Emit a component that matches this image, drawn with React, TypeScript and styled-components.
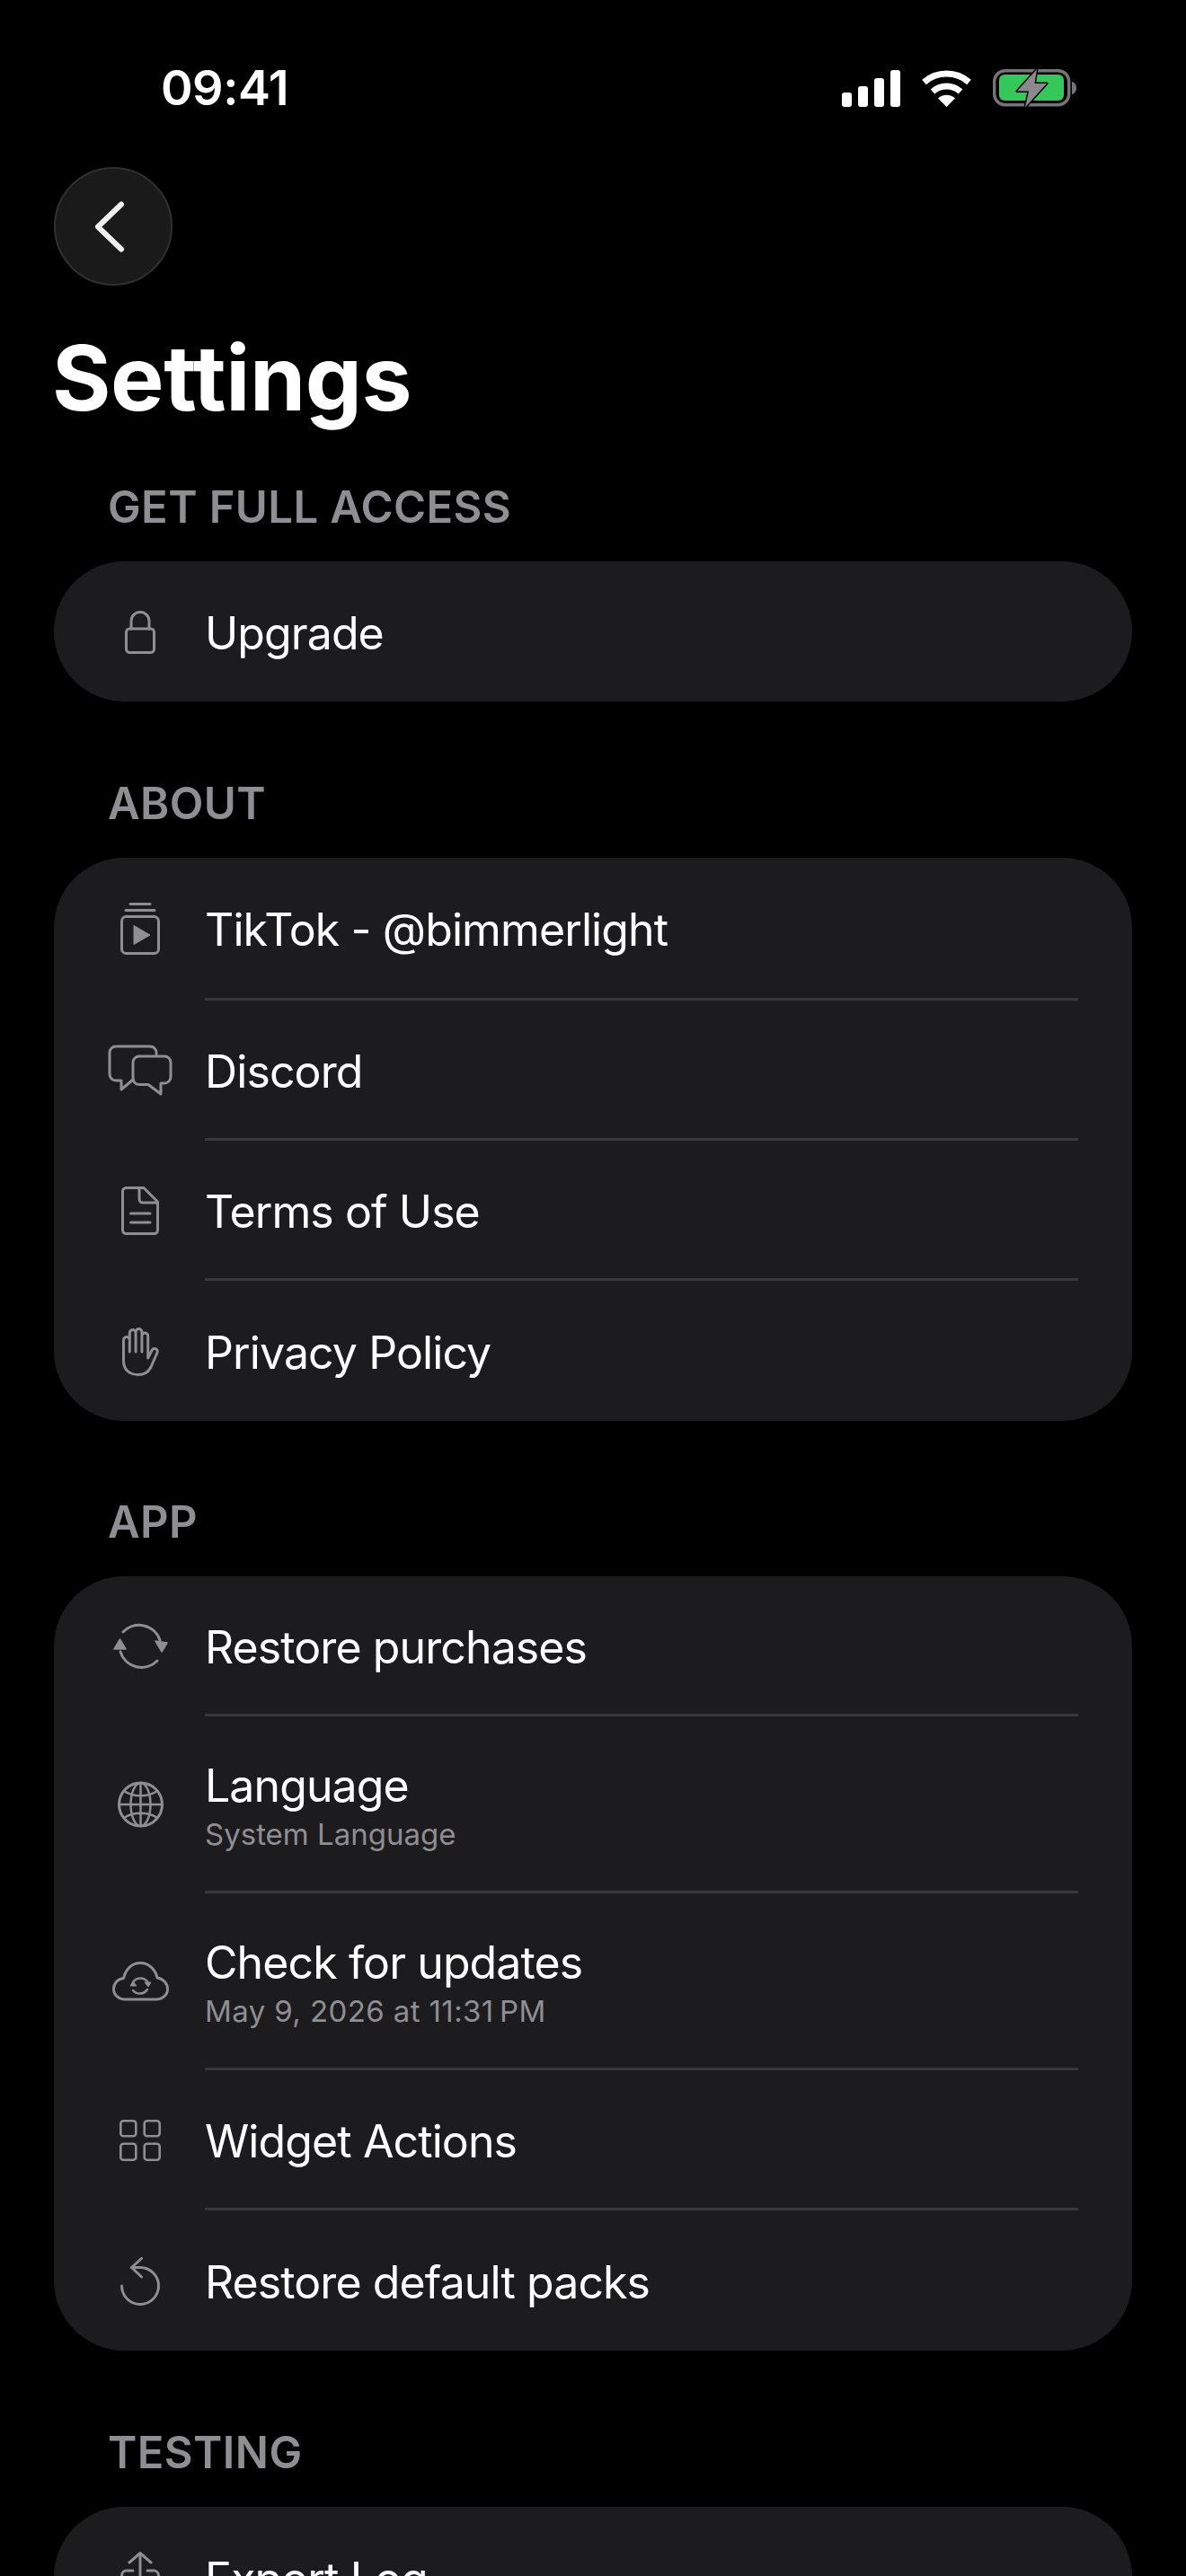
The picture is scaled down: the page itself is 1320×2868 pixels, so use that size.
import React from 'react';
import styled, { createGlobalStyle } from 'styled-components';

const GlobalStyle = createGlobalStyle`
  html, body {
    margin: 0;
    padding: 0;
    background: #000;
  }
`;

const Page = styled.div`
  width: 1320px;
  height: 2868px;
  overflow: hidden;
  background: #000;
  color: #fff;
  font-family: Inter, 'Liberation Sans', sans-serif;
  -webkit-font-smoothing: antialiased;
`;

const StatusBar = styled.div`
  box-sizing: border-box;
  height: 160px;
  padding: 36px 122px 0 179px;
  display: flex;
  align-items: center;
  justify-content: space-between;
`;

const Time = styled.span`
  font-size: 54px;
  font-weight: 600;
  line-height: 60px;
  letter-spacing: -0.5px;
`;

const StatusIcons = styled.div`
  display: flex;
  align-items: center;
  gap: 23px;
`;

const Content = styled.div`
  padding: 26px 60px 0;
`;

const BackButton = styled.button`
  box-sizing: border-box;
  display: flex;
  align-items: center;
  justify-content: center;
  width: 132px;
  height: 132px;
  padding: 0 9px 0 0;
  border: 2px solid #303030;
  border-radius: 50%;
  background: #1a1a1a;
`;

const Title = styled.h1`
  margin: 43px 0 0 -2px;
  font-size: 100px;
  font-weight: 700;
  line-height: 120px;
  letter-spacing: -0.4px;
`;

const Section = styled.section<{ $gap: number }>`
  margin-top: ${(p) => p.$gap}px;
`;

const SectionLabel = styled.h2`
  margin: 0 0 30px;
  padding-left: 60px;
  font-size: 49px;
  font-weight: 600;
  line-height: 60px;
  letter-spacing: 0.4px;
  color: #8e8e93;
`;

const Card = styled.div`
  border-radius: 78px;
  background: #1c1c1e;
`;

const Row = styled.div<{ $height: number }>`
  display: flex;
  align-items: center;
  gap: 36px;
  box-sizing: border-box;
  height: ${(p) => p.$height}px;
  padding: 2px 0 0 60px;
`;

const IconSlot = styled.div`
  flex: none;
  width: 72px;
  display: flex;
  justify-content: center;
  color: #8e8e93;

  svg {
    display: block;
  }
`;

const Labels = styled.div`
  display: flex;
  flex-direction: column;
`;

const RowTitle = styled.span`
  padding-top: 2px;
  font-size: 50px;
  font-weight: 400;
  line-height: 60px;
  letter-spacing: -0.9px;
`;

const RowSub = styled.span<{ $spaced?: boolean }>`
  margin-top: 4px;
  font-size: 33px;
  font-weight: 400;
  line-height: 40px;
  letter-spacing: ${(p) => (p.$spaced ? '0.4px' : '0')};
  color: #8e8e93;
`;

const Divider = styled.div`
  height: 3px;
  margin: 0 60px 0 168px;
  background: #38383a;
`;

const line = {
  fill: 'none',
  stroke: 'currentColor',
  strokeWidth: 3,
  strokeLinecap: 'round',
  strokeLinejoin: 'round',
} as const;

const SignalIcon = () => (
  <svg width="65" height="41" viewBox="0 0 65 41" fill="#fff">
    <rect x="0" y="25" width="11" height="16" rx="3" />
    <rect x="18" y="18" width="11" height="23" rx="3" />
    <rect x="36" y="9" width="11" height="32" rx="3" />
    <rect x="54" y="0" width="11" height="41" rx="3" />
  </svg>
);

const WifiIcon = () => (
  <svg width="57" height="42" viewBox="0 0 57 42">
    <path d="M3.5 14.5A38 38 0 0 1 53.5 14.5" fill="none" stroke="#fff" strokeWidth="7" />
    <path d="M13 25A23 23 0 0 1 44 25" fill="none" stroke="#fff" strokeWidth="7" />
    <path d="M19 32.5A14 14 0 0 1 38 32.5L28.5 42Z" fill="#fff" />
  </svg>
);

const BatteryIcon = () => (
  <svg width="93" height="44" viewBox="0 0 93 44">
    <rect x="1.7" y="2.7" width="83" height="38" rx="12" fill="none" stroke="#757577" strokeWidth="3.4" />
    <rect x="7" y="7" width="72" height="29" rx="6" fill="#34c759" />
    <path d="M88 15c3 .5 5 3 5 7s-2 6.500-5 7Z" fill="#757577" />
    <path
      d="M49 1L27 25.500H40L36 43.500L60 17H46.500Z"
      fill="#8a8a8e"
      stroke="#000"
      strokeWidth="3"
      strokeLinejoin="round"
      paintOrder="stroke"
    />
  </svg>
);

const ChevronIcon = () => (
  <svg width="34" height="57" viewBox="0 0 34 57">
    <path d="M30 3.500L4 28.500L30 53.500" fill="none" stroke="#eee" strokeWidth="6" strokeLinecap="round" strokeLinejoin="round" />
  </svg>
);

const LockIcon = () => (
  <svg width="34" height="48" viewBox="0 0 34 48">
    <rect x="1.500" y="20" width="31" height="26.500" rx="4" {...line} />
    <path d="M7 20V11.500a10 10 0 0 1 20 0V20" {...line} />
  </svg>
);

const ReelIcon = () => (
  <svg width="44" height="58" viewBox="0 0 44 58">
    <path d="M11 1.500H33" {...line} />
    <path d="M6 8.500H38" {...line} />
    <rect x="1.500" y="15.500" width="41" height="41" rx="5" {...line} />
    <path d="M15 25.500V46.500L33 36Z" fill="currentColor" stroke="currentColor" strokeWidth="1" strokeLinejoin="round" />
  </svg>
);

const ChatIcon = () => (
  <svg width="72" height="58" viewBox="0 0 72 58">
    <path d="M54 12V9a7 7 0 0 0-7-7H9a7 7 0 0 0-7 7V33a7 7 0 0 0 7 7h6V50L28 39" {...line} />
    <path d="M35 13H63a7 7 0 0 1 7 7V36a7 7 0 0 1-7 7H59V55L45 44.500H35a7 7 0 0 1-7-7V20a7 7 0 0 1 7-7Z" {...line} />
  </svg>
);

const DocIcon = () => (
  <svg width="42" height="54" viewBox="0 0 42 54">
    <path d="M5.500 1.500H25L40.500 17V48.500a4 4 0 0 1-4 4H5.500a4 4 0 0 1-4-4V5.500a4 4 0 0 1 4-4Z" {...line} />
    <path d="M20 2V14a4 4 0 0 0 4 4H40" {...line} />
    <path d="M10.500 30H32" {...line} />
    <path d="M10.500 40H32" {...line} />
  </svg>
);

const HandIcon = () => (
  <svg width="41" height="54" viewBox="0 0 41 54">
    <path d="M1.500 37V14a3.400 3.400 0 0 1 6.800 0V27V6a3.400 3.400 0 0 1 6.800 0V27V5a3.400 3.400 0 0 1 6.800 0V27V9.500a3.400 3.400 0 0 1 6.800 0V34L33 25.500a3 3 0 0 1 6 2.500L32 44C29 50 25 52.500 18 52.500C8 52.500 1.500 47 1.500 37Z" {...line} />
  </svg>
);

const SyncIcon = () => (
  <svg width="61" height="52" viewBox="0 0 61 52">
    <path d="M11 10A24.500 24.500 0 0 1 52 19" {...line} />
    <path d="M8 32A24.500 24.500 0 0 0 49 42" {...line} />
    <path d="M47 20L60 22L54 32Z" fill="currentColor" stroke="currentColor" strokeWidth="1.500" strokeLinejoin="round" />
    <path d="M1 29L14 29L7.500 18Z" fill="currentColor" stroke="currentColor" strokeWidth="1.500" strokeLinejoin="round" />
  </svg>
);

const GlobeIcon = () => (
  <svg width="51" height="52" viewBox="0 0 51 52">
    <circle cx="25.500" cy="26" r="24" {...line} />
    <ellipse cx="25.500" cy="26" rx="11" ry="24" {...line} strokeWidth="2.500" />
    <path d="M25.500 2V50M1.500 26H49.500" {...line} strokeWidth="2.500" />
    <path d="M7 11C17 18 34 18 44 11M7 41C17 34 34 34 44 41" {...line} strokeWidth="2.500" />
  </svg>
);

const CloudIcon = () => (
  <svg width="63" height="44" viewBox="0 0 63 44">
    <path d="M14 42H49C56 42 61.500 37 61.500 30.500C61.500 24 56.500 19 50 18C48 9 41 1.500 31 1.500C22 1.500 15 8 12.500 18.500C6 19.500 1.500 24 1.500 30.500C1.500 37 7 42 14 42Z" {...line} />
    <path d="M23 23A10 10 0 0 1 39 22" {...line} strokeWidth="2.500" />
    <path d="M23 32A10 10 0 0 0 39 31" {...line} strokeWidth="2.500" />
    <path d="M36 23L43 23L40 28ZM20 27L27 27L23 22Z" fill="currentColor" stroke="currentColor" strokeWidth="1" strokeLinejoin="round" />
  </svg>
);

const GridIcon = () => (
  <svg width="46" height="46" viewBox="0 0 46 46">
    <rect x="1.300" y="1.300" width="17" height="17" rx="3" {...line} strokeWidth="2.600" />
    <rect x="27.700" y="1.300" width="17" height="17" rx="3" {...line} strokeWidth="2.600" />
    <rect x="1.300" y="26.700" width="17" height="18" rx="3" {...line} strokeWidth="2.600" />
    <rect x="27.700" y="26.700" width="17" height="18" rx="3" {...line} strokeWidth="2.600" />
  </svg>
);

const UndoIcon = () => (
  <svg width="44" height="54" viewBox="0 0 44 54">
    <path d="M23.500 1.500L12.500 11.500L23.500 22" {...line} />
    <path d="M12.500 11.500H22A20.500 20.500 0 1 1 1.500 32" {...line} />
  </svg>
);

const ShareIcon = () => (
  <svg width="44" height="58" viewBox="0 0 44 58">
    <path d="M10 12L22 1.500L34 12" {...line} />
    <path d="M22 2V38" {...line} />
    <path d="M14 21H7a5.500 5.500 0 0 0-5.500 5.500V51a5.500 5.500 0 0 0 5.500 5.500H37a5.500 5.500 0 0 0 5.500-5.500V26.500A5.500 5.500 0 0 0 37 21H30" {...line} />
  </svg>
);

type Item = { icon: React.ReactNode; title: string; sub?: string; spaced?: boolean; height: number };
type Group = { label: string; gap: number; items: Item[] };

const groups: Group[] = [
  {
    label: 'GET FULL ACCESS',
    gap: 54,
    items: [{ icon: <LockIcon />, title: 'Upgrade', height: 156 }],
  },
  {
    label: 'ABOUT',
    gap: 84,
    items: [
      { icon: <ReelIcon />, title: 'TikTok - @bimmerlight', height: 156 },
      { icon: <ChatIcon />, title: 'Discord', height: 153 },
      { icon: <DocIcon />, title: 'Terms of Use', height: 153 },
      { icon: <HandIcon />, title: 'Privacy Policy', height: 156 },
    ],
  },
  {
    label: 'APP',
    gap: 83,
    items: [
      { icon: <SyncIcon />, title: 'Restore purchases', height: 153 },
      { icon: <GlobeIcon />, title: 'Language', sub: 'System Language', height: 194 },
      {
        icon: <CloudIcon />,
        title: 'Check for updates',
        sub: 'May 9, 2026 at 11:31\u202FPM',
        spaced: true,
        height: 194,
      },
      { icon: <GridIcon />, title: 'Widget Actions', height: 153 },
      { icon: <UndoIcon />, title: 'Restore default packs', height: 156 },
    ],
  },
  {
    label: 'TESTING',
    gap: 84,
    items: [{ icon: <ShareIcon />, title: 'Export Log', height: 156 }],
  },
];

export default function App() {
  return (
    <Page>
      <GlobalStyle />
      <StatusBar>
        <Time>09:41</Time>
        <StatusIcons>
          <SignalIcon />
          <WifiIcon />
          <BatteryIcon />
        </StatusIcons>
      </StatusBar>
      <Content>
        <BackButton aria-label="Back">
          <ChevronIcon />
        </BackButton>
        <Title>Settings</Title>
        {groups.map((group) => (
          <Section key={group.label} $gap={group.gap}>
            <SectionLabel>{group.label}</SectionLabel>
            <Card>
              {group.items.map((item, i) => (
                <React.Fragment key={item.title}>
                  {i > 0 && <Divider />}
                  <Row $height={item.height}>
                    <IconSlot>{item.icon}</IconSlot>
                    <Labels>
                      <RowTitle>{item.title}</RowTitle>
                      {item.sub && <RowSub $spaced={item.spaced}>{item.sub}</RowSub>}
                    </Labels>
                  </Row>
                </React.Fragment>
              ))}
            </Card>
          </Section>
        ))}
      </Content>
    </Page>
  );
}
